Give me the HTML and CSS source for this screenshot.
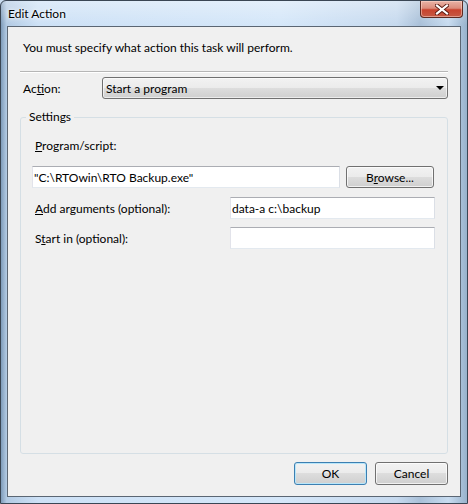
FILE: index.html
```html
<!DOCTYPE html>
<html lang="en">
  <head>
    <meta charset="UTF-8" />
    <title>Edit Action</title>
    <link rel="stylesheet" href="styles.css">
  </head>
  <body>
    <div class="window">
      <div class="titlebar">
        <span class="title">Edit Action</span>
        <button class="close" aria-label="Close">
          <svg width="14" height="11" viewBox="0 0 14 11">
            <path d="M2 1.5 L12 9.5 M12 1.5 L2 9.5" stroke="#5a1a12" stroke-width="4" stroke-linecap="square" />
            <path d="M2 1.5 L12 9.5 M12 1.5 L2 9.5" stroke="#fff" stroke-width="2.2" stroke-linecap="square" />
          </svg>
        </button>
      </div>
      <div class="client">
        <p class="intro">You must specify what action this task will perform.</p>
        <div class="sep"></div>
        <div class="action-row">
          <label class="action-label">Ac<u>t</u>ion:</label>
          <div class="combo">
            <span>Start a program</span>
            <span class="arrow"></span>
          </div>
        </div>
        <fieldset class="settings">
          <legend>Settings</legend>
          <label class="field-label" for="program"><u>P</u>rogram/script:</label>
          <div class="row first">
            <input type="text" id="program" class="textbox program" value='"C:\RTOwin\RTO Backup.exe"' />
            <button class="btn browse">B<u>r</u>owse...</button>
          </div>
          <div class="row">
            <label for="args"><u>A</u>dd arguments (optional):</label>
            <input type="text" id="args" class="textbox short" value="data-a c:\backup" />
          </div>
          <div class="row last">
            <label for="startin">S<u>t</u>art in (optional):</label>
            <input type="text" id="startin" class="textbox short" />
          </div>
        </fieldset>
        <div class="buttons">
          <button class="btn default">OK</button>
          <button class="btn">Cancel</button>
        </div>
      </div>
    </div>
  </body>
</html>
```

FILE: styles.css
```css
* {
  box-sizing: border-box;
}
body {
  margin: 0;
  font-family: "Segoe UI", Lato, "Noto Sans", sans-serif;
  font-size: 12px;
  color: #000;
  background: #c9dcef;
}
.window {
  width: 468px;
  height: 504px;
  border: 1px solid #3a4654;
  border-radius: 6px 6px 0 0;
  display: flex;
  flex-direction: column;
  overflow: hidden;
  background:
    linear-gradient(to bottom, rgba(255, 255, 255, 0.35), rgba(255, 255, 255, 0) 24px),
    linear-gradient(to right, #7f9cba 0, #b2cae3 1.2%, #cde1f6 8%, #d5e7f9 60%, #c6d9ee 85%, #a9c0d8 90%, #c8dcf0 96%, #98b2cc 100%);
}
.titlebar {
  height: 25px;
  display: flex;
  justify-content: space-between;
  align-items: flex-start;
  padding-left: 7px;
}
.title {
  line-height: 25px;
  text-shadow: 0 0 6px #fff, 0 0 3px #fff;
}
.close {
  width: 43px;
  height: 17px;
  margin-right: 4px;
  padding: 0;
  border: 1px solid #5e2a22;
  border-top: none;
  border-radius: 0 0 4px 4px;
  background: linear-gradient(to bottom, #e9b3a6 0, #dc8c7c 45%, #c9432e 55%, #c55a45 100%);
  box-shadow: inset 0 0 0 1px rgba(255, 220, 210, 0.5);
  display: flex;
  align-items: center;
  justify-content: center;
}
.client {
  height: 471px;
  margin: 0 6px 6px;
  border: 1px solid #5b6673;
  background: #f0f0f0;
  padding: 13px 12px 11px;
  display: flex;
  flex-direction: column;
}
.intro {
  margin: 0 0 0 3px;
  line-height: 16px;
}
.sep {
  margin-top: 15px;
  border-top: 1px solid #b6b6b6;
  border-bottom: 1px solid #fff;
}
.action-row {
  margin-top: 4px;
  height: 22px;
  display: flex;
  align-items: center;
}
.action-label {
  width: 82px;
  padding-left: 3px;
}
.combo {
  flex: 1;
  height: 22px;
  border: 1px solid #707070;
  border-radius: 3px;
  padding: 0 3px 0 3px;
  display: flex;
  align-items: center;
  justify-content: space-between;
  background: linear-gradient(to bottom, #f2f2f2 0, #ebebeb 50%, #dddddd 50%, #cfcfcf 100%);
  box-shadow: inset 0 0 0 1px rgba(255, 255, 255, 0.6);
}
.arrow {
  width: 0;
  height: 0;
  border-left: 4px solid transparent;
  border-right: 4px solid transparent;
  border-top: 4px solid #000;
}
.settings {
  flex: 1;
  min-width: 0;
  margin: 10px 0 0;
  border: 1px solid #d5dfe5;
  border-radius: 3px;
  padding: 13px 12px 0 11px;
}
.settings legend {
  margin-left: -6px;
  padding: 0 3px;
  line-height: 16px;
}
.field-label {
  display: block;
  margin-left: 3px;
  line-height: 16px;
}
.row {
  display: flex;
  align-items: center;
  height: 22px;
  margin-top: 9px;
}
.row.first {
  margin-top: 12px;
  gap: 6px;
}
.row.last {
  margin-top: 8px;
}
.row label {
  flex: 1;
  padding-left: 3px;
}
.textbox {
  height: 22px;
  border: 1px solid;
  border-color: #abadb3 #dbdfe6 #e3e9ef #e2e3ea;
  padding: 0 1px;
  font: inherit;
  color: #000;
  background: #fff;
  outline: none;
}
.program {
  width: 308px;
}
.short {
  width: 205px;
}
.btn {
  height: 23px;
  width: 73px;
  padding: 0;
  border: 1px solid #707070;
  border-radius: 3px;
  font: inherit;
  color: #000;
  background: linear-gradient(to bottom, #f2f2f2 0, #ebebeb 50%, #dddddd 50%, #cfcfcf 100%);
  box-shadow: inset 0 0 0 1px rgba(255, 255, 255, 0.7);
}
.browse {
  width: 88px;
  height: 22px;
}
.default {
  border-color: #3c7fb1;
  box-shadow: inset 0 0 0 1px #b8e6fa;
}
.buttons {
  margin-top: 8px;
  display: flex;
  justify-content: flex-end;
  gap: 8px;
}
```
